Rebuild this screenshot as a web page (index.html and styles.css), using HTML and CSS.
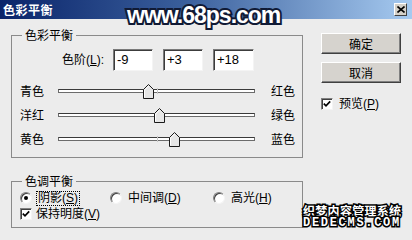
FILE: index.html
```html
<!DOCTYPE html>
<html lang="zh-CN">
<head>
<meta charset="utf-8">
<title>色彩平衡</title>
<link rel="stylesheet" href="styles.css">
</head>
<body>
<div class="dialog">
  <div class="titlebar">
    <span class="title">色彩平衡</span>
    <span class="close"><svg width="8" height="7" viewBox="0 0 8 7"><path d="M0.5 0.5 L7.5 6.5 M7.5 0.5 L0.5 6.5" stroke="#000" stroke-width="1.6" fill="none"/></svg></span>
  </div>
  <div class="content">
    <div class="groups">
      <fieldset class="group group-color">
        <legend>色彩平衡</legend>
        <div class="levels">
          <span class="levels-label">色阶(<u>L</u>):</span>
          <span class="field">-9</span>
          <span class="field">+3</span>
          <span class="field field-wide">+18</span>
        </div>
        <div class="slider-row">
          <span class="slabel">青色</span>
          <div class="track"><span class="tick"></span><svg class="thumb" style="left:45.5%" width="11" height="15" viewBox="0 0 11 15"><polygon points="0.5,5.5 5.5,0.5 10.5,5.5 10.5,14.5 0.5,14.5" fill="#e6e6e6" stroke="#1a1a1a"/><polyline points="1.5,13.5 1.5,6 5.5,2" fill="none" stroke="#fff"/></svg></div>
          <span class="slabel slabel-right">红色</span>
        </div>
        <div class="slider-row">
          <span class="slabel">洋红</span>
          <div class="track"><span class="tick"></span><svg class="thumb" style="left:51.5%" width="11" height="15" viewBox="0 0 11 15"><polygon points="0.5,5.5 5.5,0.5 10.5,5.5 10.5,14.5 0.5,14.5" fill="#e6e6e6" stroke="#1a1a1a"/><polyline points="1.5,13.5 1.5,6 5.5,2" fill="none" stroke="#fff"/></svg></div>
          <span class="slabel slabel-right">绿色</span>
        </div>
        <div class="slider-row">
          <span class="slabel">黄色</span>
          <div class="track"><span class="tick"></span><svg class="thumb" style="left:59%" width="11" height="15" viewBox="0 0 11 15"><polygon points="0.5,5.5 5.5,0.5 10.5,5.5 10.5,14.5 0.5,14.5" fill="#e6e6e6" stroke="#1a1a1a"/><polyline points="1.5,13.5 1.5,6 5.5,2" fill="none" stroke="#fff"/></svg></div>
          <span class="slabel slabel-right">蓝色</span>
        </div>
      </fieldset>
      <fieldset class="group group-tone">
        <legend>色调平衡</legend>
        <div class="radios">
          <label class="opt"><span class="radio"><span class="dot"></span></span><span class="opt-text focus">阴影(<u>S</u>)</span></label>
          <label class="opt"><span class="radio"></span><span class="opt-text">中间调(<u>D</u>)</span></label>
          <label class="opt"><span class="radio"></span><span class="opt-text">高光(<u>H</u>)</span></label>
        </div>
        <label class="check-row">
          <span class="checkbox"><svg width="8" height="8" viewBox="0 0 8 8"><path d="M0.8 3.6 L3 5.8 L7.2 1.4" fill="none" stroke="#000" stroke-width="1.7"/></svg></span>
          <span>保持明度(<u>V</u>)</span>
        </label>
      </fieldset>
    </div>
    <div class="actions">
      <span class="btn btn-default">确定</span>
      <span class="btn">取消</span>
      <label class="check-row preview">
        <span class="checkbox"><svg width="8" height="8" viewBox="0 0 8 8"><path d="M0.8 3.6 L3 5.8 L7.2 1.4" fill="none" stroke="#000" stroke-width="1.7"/></svg></span>
        <span>预览(<u>P</u>)</span>
      </label>
    </div>
  </div>
  <div class="wm-top">www.68ps.com</div>
  <div class="wm-bottom">
    <div class="wm-cn">织梦内容管理系统</div>
    <div class="wm-en">DEDECMS.COM</div>
  </div>
</div>
</body>
</html>
```

FILE: styles.css
```css
* { box-sizing: border-box; }
html, body { margin: 0; padding: 0; }
body {
  width: 412px;
  height: 240px;
  overflow: hidden;
  background: #ececec;
  font-family: "Liberation Sans", "Noto Sans CJK SC", sans-serif;
  font-size: 12px;
  line-height: 14px;
  color: #000;
}
u { text-decoration: underline; text-underline-offset: 1px; }
.dialog { position: relative; width: 412px; height: 240px; }

.titlebar {
  height: 19px;
  display: flex;
  align-items: center;
  justify-content: space-between;
  padding: 0 5px 0 3px;
  background: linear-gradient(to right, #0a246a 0%, #3a5f9c 45%, #a6caf0 100%);
}
.title {
  color: #fff;
  font-family: "Noto Sans CJK SC", sans-serif;
  font-weight: bold;
  font-size: 12px;
  letter-spacing: 0.5px;
  line-height: 14px;
}
.close {
  width: 13px;
  height: 13px;
  background: #d4d0c8;
  border: 1px solid;
  border-color: #fff #404040 #404040 #fff;
  display: flex;
  align-items: center;
  justify-content: center;
}

.content { display: flex; align-items: flex-start; }
.groups { margin-left: 11px; width: 292px; margin-top: 9px; }
.group {
  margin: 0;
  padding: 0;
  min-width: 0;
  border: 1px solid #8a8a8a;
}
.group legend {
  margin-left: 10px;
  padding: 0 3px;
  line-height: 14px;
  font-family: "Noto Sans CJK SC", sans-serif;
}
.group-color { padding-bottom: 6px; }
.group-tone { margin-top: 16px; padding-bottom: 7px; }

.levels {
  display: flex;
  align-items: center;
  gap: 9px;
  padding-left: 50px;
  margin-top: 7px;
  margin-bottom: 8px;
}
.levels-label { width: 42px; flex-shrink: 0; white-space: nowrap; }
.field {
  flex-shrink: 0;
  width: 40px;
  height: 22px;
  background: #fff;
  border: 1px solid;
  border-color: #7a7a7a #f4f4f4 #f4f4f4 #7a7a7a;
  box-shadow: inset 1px 1px 0 #3c3c3c;
  padding-left: 3px;
  font-size: 13px;
  line-height: 20px;
}
.field + .field { margin-left: 1px; }
.field-wide { width: 41px; }

.slider-row {
  display: flex;
  align-items: center;
  height: 24px;
  padding-left: 8px;
}
.slabel { width: 24px; flex-shrink: 0; white-space: nowrap; font-family: "Noto Sans CJK SC", sans-serif; }
.slabel-right { margin-left: 16px; }
.track {
  position: relative;
  flex-shrink: 0;
  margin-left: 14px;
  width: 197px;
  height: 4px;
  background: #fff;
  border: 1px solid #6c6c6c;
  border-top-color: #3a3a3a;
}
.tick {
  position: absolute;
  left: 50%;
  top: -2px;
  width: 1px;
  height: 6px;
  background: #c8c8c8;
}
.thumb {
  position: absolute;
  top: -6px;
  margin-left: -5px;
  display: block;
}

.radios {
  display: grid;
  grid-template-columns: 90px 103px auto;
  align-items: center;
  height: 18px;
  padding-left: 8px;
  margin-top: 1px;
}
.opt { display: flex; align-items: center; gap: 4px; white-space: nowrap; }
.opt-text { padding: 1px 2px; line-height: 13px; }
.opt-text.focus { padding: 0 1px; border: 1px dotted #000; }
.radio {
  flex-shrink: 0;
  width: 12px;
  height: 12px;
  border-radius: 50%;
  background: #fff;
  border: 1px solid;
  border-color: #808080 #f4f4f4 #f4f4f4 #808080;
  box-shadow: inset 1px 1px 0 #404040;
  display: flex;
  align-items: center;
  justify-content: center;
}
.dot { width: 4px; height: 4px; border-radius: 50%; background: #000; }

.check-row {
  display: flex;
  align-items: center;
  gap: 4px;
  height: 13px;
  padding-left: 8px;
  white-space: nowrap;
}
.checkbox {
  flex-shrink: 0;
  width: 12px;
  height: 12px;
  background: #fff;
  border: 1px solid;
  border-color: #808080 #f4f4f4 #f4f4f4 #808080;
  box-shadow: inset 1px 1px 0 #404040;
  display: flex;
  align-items: center;
  justify-content: center;
}

.actions {
  margin-left: 18px;
  margin-top: 14px;
  width: 80px;
  display: flex;
  flex-direction: column;
}
.btn {
  height: 21px;
  display: flex;
  align-items: center;
  justify-content: center;
  background: #d6d3ce;
  border: 1px solid;
  border-color: #fff #404040 #404040 #fff;
  box-shadow: inset -1px -1px 0 #808080;
  font-family: "Noto Sans CJK SC", sans-serif;
}
.btn + .btn { margin-top: 8px; }
.preview { padding-left: 0; gap: 6px; margin-top: 14px; }

.wm-top {
  position: absolute;
  left: 127px;
  top: 4px;
  font-family: "Liberation Sans", sans-serif;
  font-weight: bold;
  font-size: 23px;
  line-height: 23px;
  letter-spacing: -1px;
  color: #fff;
  -webkit-text-stroke: 4px #101a35;
  paint-order: stroke fill;
}
.wm-bottom {
  position: absolute;
  left: 303px;
  top: 204px;
  color: #fff;
  font-weight: bold;
  paint-order: stroke fill;
  -webkit-text-stroke: 3px #000;
}
.wm-cn {
  font-family: "Noto Sans CJK SC", sans-serif;
  font-size: 12px;
  line-height: 13px;
  letter-spacing: 0.3px;
}
.wm-en {
  font-family: "Liberation Mono", monospace;
  font-size: 12px;
  line-height: 12px;
  letter-spacing: 1.7px;
}
```
